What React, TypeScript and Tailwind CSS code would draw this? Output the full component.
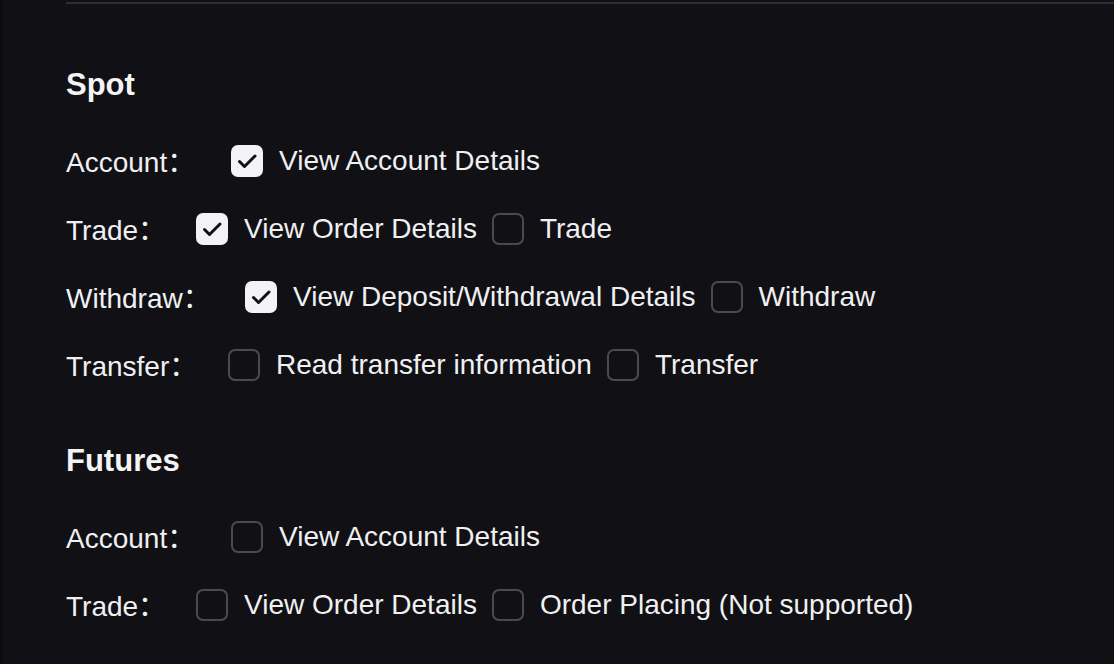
import React from "react";

type Opt = { label: string; checked: boolean };
type Row = { name: string; w: string; opts: Opt[] };

const Check = ({ checked }: { checked: boolean }) =>
  checked ? (
    <span className="block h-[32px] w-[32px] shrink-0 rounded-[7px] bg-[#f3f3f5]">
      <svg width="32" height="32" viewBox="0 0 32 32" fill="none">
        <path d="M8.5 16.5 L13.5 21.5 L24 11" stroke="#111115" strokeWidth="3" strokeLinecap="round" strokeLinejoin="round" />
      </svg>
    </span>
  ) : (
    <span className="block h-[32px] w-[32px] shrink-0 rounded-[7px] border-2 border-[#4a4a50]" />
  );

const RowView = ({ row }: { row: Row }) => (
  <div className="flex h-[36px] items-center">
    <span className={`${row.w} shrink-0 text-[28px] leading-[36px] text-[#f0f0f2]`}>
      {row.name}
      <span style={{ fontFamily: '"Noto Sans CJK SC", sans-serif' }}>：</span>
    </span>
    {row.opts.map((o, i) => (
      <span key={i} className="mr-[15px] flex items-center">
        <Check checked={o.checked} />
        <span className="ml-[16px] whitespace-nowrap text-[28px] leading-[36px] text-[#f0f0f2]">{o.label}</span>
      </span>
    ))}
  </div>
);

const spot: Row[] = [
  { name: "Account", w: "w-[165px]", opts: [{ label: "View Account Details", checked: true }] },
  { name: "Trade", w: "w-[130px]", opts: [{ label: "View Order Details", checked: true }, { label: "Trade", checked: false }] },
  { name: "Withdraw", w: "w-[179px]", opts: [{ label: "View Deposit/Withdrawal Details", checked: true }, { label: "Withdraw", checked: false }] },
  { name: "Transfer", w: "w-[162px]", opts: [{ label: "Read transfer information", checked: false }, { label: "Transfer", checked: false }] },
];

const futures: Row[] = [
  { name: "Account", w: "w-[165px]", opts: [{ label: "View Account Details", checked: false }] },
  { name: "Trade", w: "w-[130px]", opts: [{ label: "View Order Details", checked: false }, { label: "Order Placing (Not supported)", checked: false }] },
];

export default function App() {
  return (
    <div
      className="h-[664px] w-[1114px] overflow-hidden border-l-2 border-[#0b0b0e] bg-[#111115]"
      style={{ fontFamily: '"Liberation Sans", Arial, sans-serif' }}
    >
      <div className="ml-[64px] mt-[2px] h-[2px] bg-[#2b2d35]" />
      <div className="pl-[64px]">
        <div className="mt-[63px] text-[31px] font-bold leading-[36px] text-[#f4f4f6]">Spot</div>
        <div className="mt-[40px] flex flex-col gap-[32px]">
          {spot.map((r, i) => (
            <RowView key={i} row={r} />
          ))}
        </div>
        <div className="mt-[60px] text-[31px] font-bold leading-[36px] text-[#f4f4f6]">Futures</div>
        <div className="mt-[40px] flex flex-col gap-[32px]">
          {futures.map((r, i) => (
            <RowView key={i} row={r} />
          ))}
        </div>
      </div>
    </div>
  );
}
